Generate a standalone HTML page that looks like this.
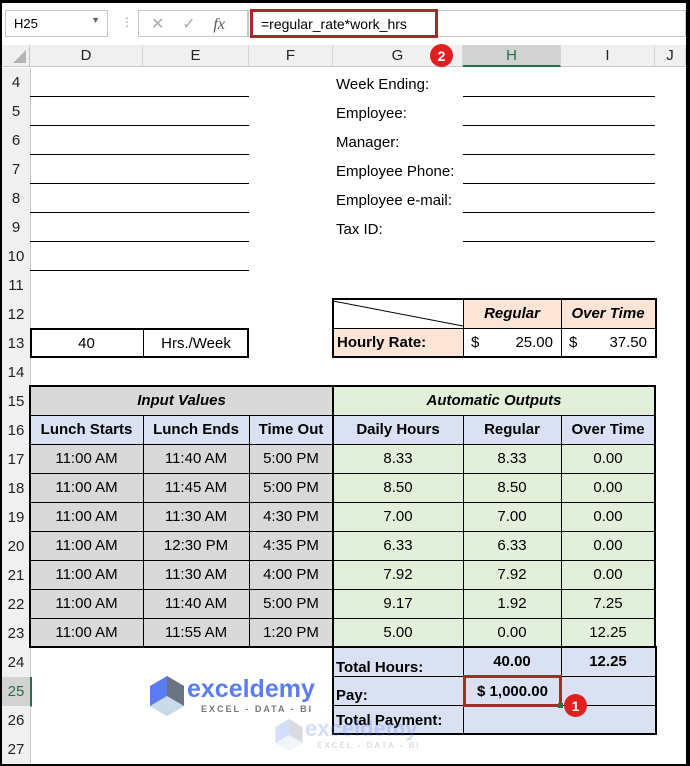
<!DOCTYPE html>
<html><head><meta charset="utf-8"><style>
body{margin:0;width:690px;height:766px;position:relative;overflow:hidden;background:#000;font-family:"Liberation Sans",sans-serif;color:#000}
#app{position:absolute;left:2px;top:3px;width:684px;height:761px;background:#fff;overflow:hidden}
.a{position:absolute;box-sizing:border-box}
.c{position:absolute;box-sizing:border-box;display:flex;align-items:center;justify-content:center;font-size:15px;white-space:nowrap}
.rh{position:absolute;left:0;width:28px;height:29px;background:#f0f0f0;border-bottom:1px solid #d4d4d4;border-right:1px solid #c8c8c8;display:flex;align-items:center;justify-content:center;font-size:15px;color:#222}
.ch{position:absolute;top:42px;height:22px;background:#f0f0f0;border-right:1px solid #d4d4d4;border-bottom:1px solid #c8c8c8;display:flex;align-items:center;justify-content:center;font-size:15px;color:#222;box-sizing:border-box}
.ul{position:absolute;height:1px;background:#000}
.lbl{position:absolute;left:334px;font-size:15px;height:29px;display:flex;align-items:center;padding-top:4px;box-sizing:border-box}
.b{font-weight:bold}.i{font-style:italic}
.g{background:#d9d9d9}.bl{background:#d9e1f2}.gr{background:#e2efda}.pe{background:#fce4d6}
</style></head><body><div id="app">
<div class="a" style="left:0;top:0;width:684px;height:39px;background:#fff"></div>
<div class="a" style="left:3px;top:7px;width:103px;height:27px;border:1px solid #c6c6c6;font-size:13px;padding:5px 0 0 8px">H25<span style="position:absolute;right:7px;top:4px;font-size:9px;color:#666">▼</span></div>
<div class="a" style="left:119px;top:12px;color:#999;font-size:12px">⋮</div>
<div class="a" style="left:136px;top:7px;width:110px;height:27px;border:1px solid #c6c6c6;font-size:16px;color:#aaa;padding:3px 0 0 12px">✕&nbsp;&nbsp;&nbsp;&nbsp;✓&nbsp;&nbsp;&nbsp;&nbsp;<i style="font-family:'Liberation Serif';color:#555">fx</i></div>
<div class="a" style="left:246px;top:7px;width:438px;height:27px;border:1px solid #c6c6c6"></div>
<div class="a" style="left:248px;top:6px;width:188px;height:29px;border:3px solid #a52a2a;font-size:14px;padding:4px 0 0 8px">=regular_rate*work_hrs</div>
<div class="a" style="left:0;top:42px;width:28px;height:22px;background:#f0f0f0;border-right:1px solid #c8c8c8;border-bottom:1px solid #c8c8c8"><div style="position:absolute;right:3px;bottom:3px;width:0;height:0;border-left:13px solid transparent;border-bottom:13px solid #b4b4b4"></div></div>
<div class="ch" style="left:28px;width:113px">D</div>
<div class="ch" style="left:141px;width:106px">E</div>
<div class="ch" style="left:247px;width:84px">F</div>
<div class="ch" style="left:331px;width:130px">G</div>
<div class="ch" style="left:461px;width:98px;background:#d2d2d2;color:#217346;border-bottom:2px solid #217346">H</div>
<div class="ch" style="left:559px;width:94px">I</div>
<div class="ch" style="left:653px;width:31px">J</div>
<div class="a" style="left:428px;top:41px;width:23px;height:23px;border-radius:50%;background:#e02020;color:#fff;font-weight:bold;font-size:14px;display:flex;align-items:center;justify-content:center">2</div>
<div class="rh" style="top:65px">4</div><div class="rh" style="top:94px">5</div><div class="rh" style="top:123px">6</div><div class="rh" style="top:152px">7</div><div class="rh" style="top:181px">8</div><div class="rh" style="top:210px">9</div><div class="rh" style="top:239px">10</div><div class="rh" style="top:268px">11</div><div class="rh" style="top:297px">12</div><div class="rh" style="top:326px">13</div><div class="rh" style="top:355px">14</div><div class="rh" style="top:384px">15</div><div class="rh" style="top:413px">16</div><div class="rh" style="top:442px">17</div><div class="rh" style="top:471px">18</div><div class="rh" style="top:500px">19</div><div class="rh" style="top:529px">20</div><div class="rh" style="top:558px">21</div><div class="rh" style="top:587px">22</div><div class="rh" style="top:616px">23</div><div class="rh" style="top:645px">24</div><div class="rh" style="top:674px;background:#d2d2d2;color:#217346;border-right:2px solid #217346">25</div><div class="rh" style="top:703px">26</div><div class="rh" style="top:732px">27</div>
<div class="ul" style="left:28px;width:219px;top:93px"></div><div class="ul" style="left:28px;width:219px;top:122px"></div><div class="ul" style="left:28px;width:219px;top:151px"></div><div class="ul" style="left:28px;width:219px;top:180px"></div><div class="ul" style="left:28px;width:219px;top:209px"></div><div class="ul" style="left:28px;width:219px;top:238px"></div><div class="ul" style="left:28px;width:219px;top:267px"></div>
<div class="lbl" style="top:65px">Week Ending:</div><div class="lbl" style="top:94px">Employee:</div><div class="lbl" style="top:123px">Manager:</div><div class="lbl" style="top:152px">Employee Phone:</div><div class="lbl" style="top:181px">Employee e-mail:</div><div class="lbl" style="top:210px">Tax ID:</div>
<div class="ul" style="left:461px;width:192px;top:93px"></div><div class="ul" style="left:461px;width:192px;top:122px"></div><div class="ul" style="left:461px;width:192px;top:151px"></div><div class="ul" style="left:461px;width:192px;top:180px"></div><div class="ul" style="left:461px;width:192px;top:209px"></div><div class="ul" style="left:461px;width:192px;top:238px"></div>
<div class="a" style="left:28px;top:325px;width:219px;height:30px;border:2px solid #000"></div>
<div class="a" style="left:141px;top:325px;width:1px;height:30px;background:#000"></div>
<div class="c" style="left:28px;top:325px;width:113px;height:30px">40</div>
<div class="c" style="left:141px;top:325px;width:106px;height:30px">Hrs./Week</div>
<div class="c pe b i" style="left:461px;top:296px;width:98px;height:29px">Regular</div>
<div class="c pe b i" style="left:559px;top:296px;width:94px;height:29px">Over Time</div>
<div class="c pe b" style="left:331px;top:325px;width:130px;height:29px;justify-content:flex-start;padding-left:4px">Hourly Rate:</div>
<div class="c" style="left:461px;top:325px;width:98px;height:29px;justify-content:space-between;padding:0 8px">$<span>25.00</span></div>
<div class="c" style="left:559px;top:325px;width:94px;height:29px;justify-content:space-between;padding:0 8px">$<span>37.50</span></div>
<svg class="a" style="left:331px;top:296px" width="130" height="29"><line x1="0" y1="2" x2="130" y2="27" stroke="#000" stroke-width="1"/></svg>
<div class="a" style="left:330px;top:295px;width:325px;height:60px;border:2px solid #000"></div>
<div class="a" style="left:330px;top:325px;width:325px;height:1px;background:#000"></div>
<div class="a" style="left:461px;top:295px;width:1px;height:60px;background:#000"></div>
<div class="a" style="left:559px;top:295px;width:1px;height:60px;background:#000"></div>
<div class="c g b i" style="left:28px;top:383px;width:303px;height:29px">Input Values</div>
<div class="c gr b i" style="left:331px;top:383px;width:322px;height:29px">Automatic Outputs</div>
<div class="c bl b" style="left:28px;top:412px;width:113px;height:29px">Lunch Starts</div>
<div class="c bl b" style="left:141px;top:412px;width:106px;height:29px">Lunch Ends</div>
<div class="c bl b" style="left:247px;top:412px;width:84px;height:29px">Time Out</div>
<div class="c bl b" style="left:331px;top:412px;width:130px;height:29px">Daily Hours</div>
<div class="c bl b" style="left:461px;top:412px;width:98px;height:29px">Regular</div>
<div class="c bl b" style="left:559px;top:412px;width:94px;height:29px">Over Time</div>
<div class="a g" style="left:28px;top:441px;width:303px;height:203px"></div>
<div class="a gr" style="left:331px;top:441px;width:322px;height:203px"></div>
<div class="a" style="left:28px;top:441px;width:625px;height:203px;display:grid;grid-template-columns:113px 106px 84px 130px 98px 94px;grid-auto-rows:29px;font-size:15px">
<div class="c" style="position:static">11:00 AM</div><div class="c" style="position:static">11:40 AM</div><div class="c" style="position:static">5:00 PM</div><div class="c" style="position:static">8.33</div><div class="c" style="position:static">8.33</div><div class="c" style="position:static">0.00</div>
<div class="c" style="position:static">11:00 AM</div><div class="c" style="position:static">11:45 AM</div><div class="c" style="position:static">5:00 PM</div><div class="c" style="position:static">8.50</div><div class="c" style="position:static">8.50</div><div class="c" style="position:static">0.00</div>
<div class="c" style="position:static">11:00 AM</div><div class="c" style="position:static">11:30 AM</div><div class="c" style="position:static">4:30 PM</div><div class="c" style="position:static">7.00</div><div class="c" style="position:static">7.00</div><div class="c" style="position:static">0.00</div>
<div class="c" style="position:static">11:00 AM</div><div class="c" style="position:static">12:30 PM</div><div class="c" style="position:static">4:35 PM</div><div class="c" style="position:static">6.33</div><div class="c" style="position:static">6.33</div><div class="c" style="position:static">0.00</div>
<div class="c" style="position:static">11:00 AM</div><div class="c" style="position:static">11:30 AM</div><div class="c" style="position:static">4:00 PM</div><div class="c" style="position:static">7.92</div><div class="c" style="position:static">7.92</div><div class="c" style="position:static">0.00</div>
<div class="c" style="position:static">11:00 AM</div><div class="c" style="position:static">11:40 AM</div><div class="c" style="position:static">5:00 PM</div><div class="c" style="position:static">9.17</div><div class="c" style="position:static">1.92</div><div class="c" style="position:static">7.25</div>
<div class="c" style="position:static">11:00 AM</div><div class="c" style="position:static">11:55 AM</div><div class="c" style="position:static">1:20 PM</div><div class="c" style="position:static">5.00</div><div class="c" style="position:static">0.00</div><div class="c" style="position:static">12.25</div>
</div>
<div class="a" style="left:28px;top:412px;width:625px;height:1px;background:#000"></div>
<div class="a" style="left:28px;top:441px;width:625px;height:1px;background:#000"></div>
<div class="a" style="left:28px;top:470px;width:625px;height:1px;background:#000"></div>
<div class="a" style="left:28px;top:499px;width:625px;height:1px;background:#000"></div>
<div class="a" style="left:28px;top:528px;width:625px;height:1px;background:#000"></div>
<div class="a" style="left:28px;top:557px;width:625px;height:1px;background:#000"></div>
<div class="a" style="left:28px;top:586px;width:625px;height:1px;background:#000"></div>
<div class="a" style="left:28px;top:615px;width:625px;height:1px;background:#000"></div>
<div class="a" style="left:141px;top:412px;width:1px;height:232px;background:#000"></div>
<div class="a" style="left:247px;top:412px;width:1px;height:232px;background:#000"></div>
<div class="a" style="left:461px;top:412px;width:1px;height:232px;background:#000"></div>
<div class="a" style="left:559px;top:412px;width:1px;height:232px;background:#000"></div>
<div class="a" style="left:27px;top:382px;width:627px;height:263px;border:2px solid #000"></div>
<div class="a" style="left:330px;top:382px;width:2px;height:263px;background:#000"></div>
<div class="a bl" style="left:331px;top:644px;width:322px;height:87px"></div>
<div class="c b" style="left:334px;top:650px;height:29px">Total Hours:</div>
<div class="c b" style="left:461px;top:644px;width:98px;height:29px">40.00</div>
<div class="c b" style="left:559px;top:644px;width:94px;height:29px">12.25</div>
<div class="c b" style="left:334px;top:678px;height:29px">Pay:</div>
<div class="c b" style="left:334px;top:705px;height:25px">Total Payment:</div>
<div class="a" style="left:331px;top:673px;width:322px;height:1px;background:#000"></div>
<div class="a" style="left:331px;top:702px;width:322px;height:1px;background:#000"></div>
<div class="a" style="left:461px;top:644px;width:1px;height:87px;background:#000"></div>
<div class="a" style="left:559px;top:644px;width:1px;height:58px;background:#000"></div>
<div class="a" style="left:330px;top:643px;width:325px;height:89px;border:2px solid #000"></div>
<div class="c b" style="left:461px;top:672px;width:99px;height:32px;border:3px solid #a52a2a">$ 1,000.00</div>
<div class="a" style="left:556px;top:700px;width:5px;height:5px;background:#217346"></div>
<div class="a" style="left:562px;top:691px;width:23px;height:23px;border-radius:50%;background:#e02020;color:#fff;font-weight:bold;font-size:14px;display:flex;align-items:center;justify-content:center">1</div>
<svg class="a" style="left:148px;top:673px" width="34" height="40" viewBox="0 0 34 40"><polygon points="17,0 34,10 34,30 17,40 0,30 0,10" fill="#5b7cf5"/><polygon points="17,0 34,10 34,30 17,20" fill="#6b7380"/><polygon points="0,30 17,20 34,30 17,40" fill="#c9dbe6"/></svg>
<div class="a" style="left:185px;top:672px;font-size:25px;font-weight:bold;color:#5b7cf5">exceldemy</div>
<div class="a" style="left:199px;top:701px;font-size:9px;font-weight:bold;color:#777;letter-spacing:2px">EXCEL - DATA - BI</div>
<div style="opacity:.25">
<svg class="a" style="left:273px;top:716px" width="28" height="32" viewBox="0 0 34 40"><polygon points="17,0 34,10 34,30 17,40 0,30 0,10" fill="#5b7cf5"/><polygon points="17,0 34,10 34,30 17,20" fill="#6b7380"/><polygon points="0,30 17,20 34,30 17,40" fill="#c9dbe6"/></svg>
<div class="a" style="left:303px;top:713px;font-size:22px;font-weight:bold;color:#5b7cf5">exceldemy</div>
<div class="a" style="left:315px;top:738px;font-size:8px;font-weight:bold;color:#777;letter-spacing:2px">EXCEL - DATA - BI</div>
</div>
</div></body></html>
